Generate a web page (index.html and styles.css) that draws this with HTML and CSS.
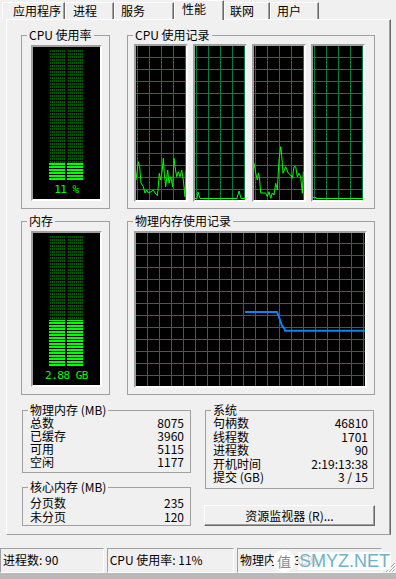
FILE: index.html
```html
<!DOCTYPE html>
<html lang="zh-CN">
<head>
    <meta charset="UTF-8">
    <title>Windows 任务管理器 - 性能</title>
    <link rel="stylesheet" href="styles.css">
</head>
<body>
    <!-- Tab strip -->
    <div class="tabs">
        <div class="tab">应用程序</div>
        <div class="tab">进程</div>
        <div class="tab">服务</div>
        <div class="tab active">性能</div>
        <div class="tab">联网</div>
        <div class="tab">用户</div>
    </div>

    <div class="panel">
        <!-- CPU -->
        <div class="row">
            <fieldset class="group meter-group">
                <legend>CPU 使用率</legend>
                <div class="meter">
                    <div class="bars">
                        <div class="col"><div class="off"></div><div class="on" style="height:17px"></div></div>
                        <div class="col"><div class="off"></div><div class="on" style="height:17px"></div></div>
                    </div>
                    <div class="meter-text">11 %</div>
                </div>
            </fieldset>
            <fieldset class="group history-group">
                <legend>CPU 使用记录</legend>
                <div class="graphs">
                    <div class="graph cpu-graph">
                        <svg viewBox="0 0 50 154" preserveAspectRatio="none"><polyline class="cpu-line" points="0,134 2.3,115.7 3.7,120.7 5,137 7.3,140.7 9,147 10.7,144 12.3,147 15,145.7 17.3,144 19,147 21.3,149.7 22.3,140.7 23.3,127.3 24.7,134 26.3,124 27.3,112.3 28.3,127.3 29.7,140.7 31.7,124 33,137.3 34.7,130.7 36.7,140.7 38,112.3 39,120.7 40.7,130.7 42.3,125.7 44,130.7 45.7,124 47.3,134 49,150.7 50,124"/></svg>
                    </div>
                    <div class="graph cpu-graph">
                        <svg viewBox="0 0 50 154" preserveAspectRatio="none"><polyline class="cpu-line" points="0,152.5 2,152.5 3,146 5,152.5 42,152.5 44,145 46,152.5 50,152.5"/></svg>
                    </div>
                    <div class="graph cpu-graph">
                        <svg viewBox="0 0 50 154" preserveAspectRatio="none"><polyline class="cpu-line" points="0,117 1.7,127 3.3,134 4.5,127 5.5,132 6.7,147 11.7,147 13.3,150.7 15,145.7 16.7,152.3 18.3,147 20,149 21.7,137.3 23.3,144 25,114 26.7,100.7 27.7,109 29,127.3 31.7,120.7 34.3,127.3 36.7,129 38.3,132.3 40,120.7 41.7,120.7 43.3,130.7 45,127.3 46.7,130.7 48.3,147.3 49.3,125.7"/></svg>
                    </div>
                    <div class="graph cpu-graph">
                        <svg viewBox="0 0 50 154" preserveAspectRatio="none"><polyline class="cpu-line" points="0,151.5 3,151.5 3,152.5 50,152.5"/></svg>
                    </div>
                </div>
            </fieldset>
        </div>

        <!-- Memory -->
        <div class="row">
            <fieldset class="group meter-group">
                <legend>内存</legend>
                <div class="meter">
                    <div class="bars">
                        <div class="col"><div class="off"></div><div class="on" style="height:46px"></div></div>
                        <div class="col"><div class="off"></div><div class="on" style="height:46px"></div></div>
                    </div>
                    <div class="meter-text">2.88 GB</div>
                </div>
            </fieldset>
            <fieldset class="group history-group">
                <legend>物理内存使用记录</legend>
                <div class="graph mem-graph">
                    <svg viewBox="0 0 229 153" preserveAspectRatio="none"><polyline class="mem-line" points="109,79 141,79 142.3,82 144,87 145.7,92 148.3,95.3 149,97.7 229,97.7"/></svg>
                </div>
            </fieldset>
        </div>

        <!-- Numbers -->
        <div class="stats">
            <div class="stats-col">
                <fieldset class="group">
                    <legend>物理内存 (MB)</legend>
                    <div class="kv-list">
                        <div class="kv"><span>总数</span><span>8075</span></div>
                        <div class="kv"><span>已缓存</span><span>3960</span></div>
                        <div class="kv"><span>可用</span><span>5115</span></div>
                        <div class="kv"><span>空闲</span><span>1177</span></div>
                    </div>
                </fieldset>
                <fieldset class="group kernel">
                    <legend>核心内存 (MB)</legend>
                    <div class="kv-list">
                        <div class="kv"><span>分页数</span><span>235</span></div>
                        <div class="kv"><span>未分页</span><span>120</span></div>
                    </div>
                </fieldset>
            </div>
            <div class="stats-col">
                <fieldset class="group system">
                    <legend>系统</legend>
                    <div class="kv-list">
                        <div class="kv"><span>句柄数</span><span>46810</span></div>
                        <div class="kv"><span>线程数</span><span>1701</span></div>
                        <div class="kv"><span>进程数</span><span>90</span></div>
                        <div class="kv"><span>开机时间</span><span>2:19:13:38</span></div>
                        <div class="kv"><span>提交 (GB)</span><span>3 / 15</span></div>
                    </div>
                </fieldset>
                <button class="monitor-btn">资源监视器 (R)...</button>
            </div>
        </div>
    </div>

    <!-- Status bar -->
    <div class="status">
        <div class="status-cell cell-proc">进程数: 90</div>
        <div class="status-cell cell-cpu">CPU 使用率: 11%</div>
        <div class="status-cell cell-mem">物理内存: 36%</div>
        <svg class="grip" viewBox="0 0 11 12">
            <path d="M10 2 L1 11 M10 5 L4 11 M10 8 L7 11" stroke="#a0a0a0" stroke-width="1"/>
            <path d="M11 3 L2 12 M11 6 L5 12 M11 9 L8 12" stroke="#fff" stroke-width="1"/>
        </svg>
    </div>
    <div class="frame-bottom"></div>

    <!-- Watermark over the status bar -->
    <div class="watermark">
        <span class="wm-logo">值</span>
        <span class="wm-text">SMYZ.NET</span>
    </div>
</body>
</html>
```

FILE: styles.css
```css
* {
    box-sizing: border-box;
}

body {
    margin: 0;
    width: 396px;
    height: 579px;
    overflow: hidden;
    position: relative;
    background-color: #f0f0f0;
    color: #000;
    font-family: "Noto Sans CJK SC", sans-serif;
    font-size: 12px;
}

/* Tabs */
.tabs {
    display: flex;
    align-items: flex-end;
    height: 19px;
    padding-left: 2px;
}

.tab {
    height: 17px;
    line-height: 16px;
    padding-left: 7px;
    background-color: #f0f0f0;
    border-top: 1px solid #fff;
    border-left: 1px solid #fff;
    border-right: 1px solid #696969;
    box-shadow: inset -1px 0 #a0a0a0;
    white-space: nowrap;
}

.tab:nth-child(1) { width: 63px; padding-left: 10px; }
.tab:nth-child(2) { width: 49px; }
.tab:nth-child(3) { width: 60px; padding-left: 6px; }
.tab:nth-child(4) { width: 50px; }
.tab:nth-child(5) { width: 46px; padding-left: 5px; }
.tab:nth-child(6) { width: 49px; padding-left: 6px; }

.tab.active {
    height: 20px;
    margin-bottom: -1px;
    position: relative;
    z-index: 1;
}

/* Tab page */
.panel {
    width: 385px;
    height: 516px;
    margin-left: 6px;
    padding: 9px 0 0 14px;
    border: 1px solid;
    border-color: #fff #696969 #a0a0a0 #fff;
    box-shadow: inset -1px 0 #a0a0a0;
}

.row {
    display: flex;
    gap: 17px;
}

.row + .row {
    margin-top: 6px;
}

.group {
    margin: 0;
    padding: 0;
    min-width: 0;
    border: 1px solid #a0a0a0;
}

.group legend {
    padding: 0 2px;
    margin-left: 5px;
    line-height: 12px;
}

/* Usage meters */
.meter-group {
    width: 89px;
    padding: 4px 0 7px 9px;
}

.meter-group legend {
    margin-left: -4px;
}

.meter {
    width: 71px;
    height: 156px;
    padding-top: 3px;
    display: flex;
    flex-direction: column;
    align-items: center;
    background-color: #000;
    border: 2px solid;
    border-color: #a0a0a0 #fff #fff #a0a0a0;
}

.bars {
    display: flex;
    gap: 2px;
    height: 130px;
    margin-left: -1px;
}

.col {
    width: 16px;
    display: flex;
    flex-direction: column;
}

.off {
    flex: 1;
    background-image:
        repeating-linear-gradient(90deg, rgba(0, 0, 0, 0.75) 0 1px, transparent 1px 2px),
        repeating-linear-gradient(to bottom, #005c00 0 2px, #000 2px 3px);
}

.on {
    background-image: repeating-linear-gradient(to top, #00ff00 0 2px, #000 2px 3px);
}

.meter-text {
    flex: 1;
    display: flex;
    align-items: center;
    color: #00ff00;
    font-family: "DejaVu Sans Mono", monospace;
    font-size: 11px;
    letter-spacing: -0.5px;
    white-space: pre;
}

/* History graphs */
.history-group {
    width: 248px;
}

.graphs {
    display: flex;
    gap: 5px;
    padding: 3px 0 6px 6px;
}

.graph {
    background-color: #000;
    background-image:
        linear-gradient(90deg, #008040 1px, transparent 1px),
        linear-gradient(#008040 1px, transparent 1px);
    background-size: 12px 12px;
    border: 2px solid;
    border-color: #a0a0a0 #fff #fff #a0a0a0;
}

.graph svg {
    display: block;
    width: 100%;
    height: 100%;
}

.cpu-graph {
    width: 54px;
    height: 158px;
    background-position: 1px 11px;
}

.mem-graph {
    width: 233px;
    height: 157px;
    margin: 4px 0 6px 6px;
    background-position: 11px 10px;
}

.cpu-line {
    fill: none;
    stroke: #00ff00;
    stroke-width: 1;
}

.mem-line {
    fill: none;
    stroke: #0a84f5;
    stroke-width: 2;
}

/* Numbers */
.stats {
    display: grid;
    grid-template-columns: 169px 169px;
    column-gap: 14px;
    align-items: start;
    margin-top: 9px;
    margin-left: 1px;
}

.kv-list {
    padding: 0 6px 4px 7px;
}

.kv {
    display: flex;
    justify-content: space-between;
    height: 13px;
    line-height: 13px;
    white-space: nowrap;
}

.kernel {
    margin-top: 8px;
}

.kernel .kv-list {
    padding: 3px 6px 1px 7px;
}

.kernel .kv {
    height: 14px;
    line-height: 14px;
}

.system .kv-list {
    padding: 0 5px 4.5px 7px;
}

.system .kv {
    height: 13.5px;
    line-height: 13.5px;
}

.monitor-btn {
    display: block;
    width: 171px;
    height: 21px;
    margin: 16px 0 0 -1px;
    padding: 0;
    font: inherit;
    line-height: 18px;
    color: #000;
    background-color: #f0f0f0;
    border: 1px solid;
    border-color: #fff #696969 #696969 #fff;
    box-shadow: inset -1px -1px #a0a0a0;
}

/* Status bar */
.status {
    display: flex;
    gap: 3px;
    height: 25px;
    margin-top: 13px;
}

.status-cell {
    padding-left: 2px;
    line-height: 22px;
    white-space: nowrap;
    overflow: hidden;
    border: 1px solid;
    border-color: #a0a0a0 #fff #fff #a0a0a0;
}

.cell-proc { width: 105px; }
.cell-cpu { width: 129px; }
.cell-mem { width: 147px; }

.grip {
    width: 11px;
    height: 12px;
    margin: auto 0 0 auto;
}

.frame-bottom {
    height: 6px;
    background-color: #b9b9b9;
}

/* Watermark */
.watermark {
    position: absolute;
    left: 273px;
    top: 550px;
    display: flex;
    align-items: center;
    gap: 3px;
}

.wm-logo {
    width: 22px;
    height: 22px;
    border-radius: 50%;
    background-color: #fff;
    color: #8a8a8a;
    font-size: 14px;
    line-height: 22px;
    text-align: center;
}

.wm-text {
    padding: 0 1px;
    background-color: rgba(255, 255, 255, 0.8);
    color: #6fb3ca;
    font-family: "Liberation Sans", sans-serif;
    font-size: 18px;
    line-height: 18px;
}
```
